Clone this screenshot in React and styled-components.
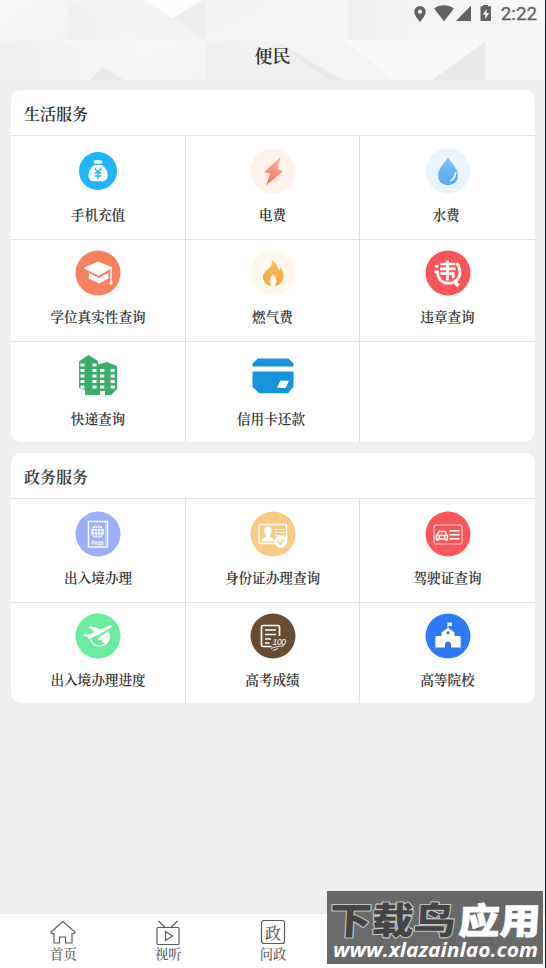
import React from 'react'
import styled, { createGlobalStyle } from 'styled-components'

const GlobalStyle = createGlobalStyle`
  * {
    box-sizing: border-box;
  }

  body {
    margin: 0;
    background: #efefef;
    color: #333;
    font-family: 'Noto Serif CJK SC', 'Noto Sans CJK SC', serif;
  }
`

const Screen = styled.div`
  position: relative;
  display: flex;
  flex-direction: column;
  width: 546px;
  height: 968px;
  overflow: hidden;
  background: #efefef;
  border-right: 1px solid #101c22;
`

const Header = styled.header`
  position: relative;
  height: 80px;
  flex-shrink: 0;
`

const Pattern = styled.svg`
  position: absolute;
  inset: 0;
`

const StatusBar = styled.div`
  position: relative;
  display: flex;
  justify-content: flex-end;
  align-items: center;
  height: 28px;
  padding-right: 8px;
  color: #626262;
`

const Time = styled.span`
  margin-left: 9px;
  font-family: Roboto, sans-serif;
  font-size: 18.8px;
  line-height: 28px;
  -webkit-text-stroke: 0.3px currentColor;
`

const Title = styled.h1`
  position: relative;
  margin: 0;
  font-size: 18px;
  font-weight: 600;
  line-height: 55px;
  text-align: center;
`

const Main = styled.main`
  display: flex;
  flex: 1;
  flex-direction: column;
  gap: 11px;
  padding: 10px 10px 0 11px;
`

const Card = styled.section`
  overflow: hidden;
  border-radius: 10px;
  background: #fff;
`

const CardTitle = styled.h2`
  height: 45px;
  margin: 0;
  padding-left: 13px;
  font-size: 16px;
  font-weight: 600;
  line-height: 47px;
`

const Grid = styled.div`
  display: grid;
  grid-template-columns: 175px 174px 175px;
  grid-template-rows: ${({$rows}) => $rows};
`

const Cell = styled.div`
  display: flex;
  flex-direction: column;
  align-items: center;
  padding-top: ${({$top}) => $top || 12}px;
  border-top: 1px solid #e2e2e2;
  border-right: 1px solid #e2e2e2;

  &:nth-child(3n) {
    border-right: none;
  }
`

const Icon = styled.svg`
  display: block;
  width: 46px;
  height: 46px;
  flex-shrink: 0;
`

const Label = styled.span`
  margin-top: 10px;
  margin-right: ${({$shift}) => $shift || 0}px;
  font-size: 13.6px;
  font-weight: 600;
  line-height: 20px;
  white-space: nowrap;
`

const NavBar = styled.nav`
  display: flex;
  height: 55px;
  padding: 0 10px 0 11px;
  border-top: 1px solid #e9e9f3;
  background: #fff;
`

const NavItem = styled.div`
  display: flex;
  flex: 1;
  flex-direction: column;
  align-items: center;
  padding-top: 5px;
  color: ${({$active}) => $active ? '#e02020' : '#5c5c5c'};
  font-size: 13.3px;
  font-weight: 500;
  line-height: 16px;
`

const NavIcon = styled.svg`
  width: 28px;
  height: 27px;
  fill: none;
  stroke: currentColor;
  stroke-width: 1.2;
`

const Watermark = styled.div`
  position: absolute;
  left: 327px;
  top: 891px;
  width: 216px;
  height: 73px;
  background: rgba(90, 90, 90, 0.91);
`

const CardList = [
  {
    title: '生活服务',
    rows: '104px 102px 101px',
    items: [
      { label: '手机充值', icon: 'recharge' },
      { label: '电费', icon: 'power' },
      { label: '水费', icon: 'water', shift: 3 },
      { label: '学位真实性查询', icon: 'degree', top: 10 },
      { label: '燃气费', icon: 'gas', top: 10 },
      { label: '违章查询', icon: 'violation', top: 10 },
      { label: '快递查询', icon: 'express', top: 10 },
      { label: '信用卡还款', icon: 'credit', top: 10, shift: 3 },
      { label: '', top: 10 },
    ],
  },
  {
    title: '政务服务',
    rows: '104px 101px',
    items: [
      { label: '出入境办理', icon: 'passport' },
      { label: '身份证办理查询', icon: 'idcard' },
      { label: '驾驶证查询', icon: 'license' },
      { label: '出入境办理进度', icon: 'travel', top: 10 },
      { label: '高考成绩', icon: 'score', top: 10 },
      { label: '高等院校', icon: 'college', top: 10 },
    ],
  },
]

const icons = {
  recharge: (
    <>
      <circle cx="23" cy="23" r="19" fill="#1fb6fb" />
      <rect x="18.7" y="12.2" width="8.6" height="3.6" rx="1.5" fill="#fff" />
      <path d="M19.5 17h7c3.500 2 6.200 6 6.200 10.200 0 4.500-2.800 6.100-6.200 6.100h-7c-3.600 0-6.100-1.800-6.100-6.100 0-4.200 2.600-8.200 6.100-10.200Z" fill="#fff" />
      <path d="m20 20.500 3 4 3-4M19.700 25h6.600M19.700 28h6.600M23 24.500v6.300" fill="none" stroke="#1fb6fb" strokeWidth="1.500" />
    </>
  ),
  power: (
    <>
      <circle cx="23" cy="23" r="22.500" fill="#fff1ec" />
      <path d="M30.500 9 14 24l6.300 1.500L16 37.500l17-14.300-5.500-1.700Z" fill="url(#bolt)" />
    </>
  ),
  water: (
    <>
      <circle cx="23" cy="23" r="22.500" fill="#eaf4fe" />
      <path d="M23 9.500c3 5 10 10.900 10 18 0 5.700-4.300 9.500-10 9.500s-10-3.800-10-9.500c0-7.100 7-13 10-18Z" fill="url(#drop)" />
      <path d="M30.800 24c.3 4.500-1.500 7.500-5.800 9.300 3-2.500 4.500-5.300 5.800-9.300Z" fill="#eaf7ff" stroke="#eaf7ff" />
    </>
  ),
  degree: (
    <>
      <circle cx="23" cy="23" r="22.500" fill="#f4825f" />
      <path d="m23 11.500 14.500 6-13.800 8.200L8.300 18ZM13.800 22.800l10 5.300 9.700-5.300v5.600L24 33.500l-10.200-4.800Z" fill="#fff" />
      <path d="M36 18v14.500" fill="none" stroke="#fff" strokeWidth="1.300" />
      <circle cx="36" cy="33" r="1.600" fill="#fff" />
    </>
  ),
  gas: (
    <>
      <circle cx="23" cy="23" r="22.500" fill="#fff8ec" />
      <path d="M21.500 10c6.200 3 5.700 8.500 8 10.500.7-1.200.8-2.500.5-3.700 3.600 4 4 8.500 3 12.200-1.300 4.500-4.800 6.700-8.500 7 2.900-3.700 2.700-8-1.500-12-3.900 4-4.200 8-1.500 12-4.500-.8-7.800-3.700-8.500-7.500-.9-4.500 2.600-7.300 5.400-9.700 2.900-2.400 4.300-5.300 3.100-8.800Z" fill="url(#flame)" />
    </>
  ),
  violation: (
    <>
      <circle cx="23" cy="23" r="22.500" fill="#fa5659" />
      <g fill="none" stroke="#fff" strokeWidth="2.700">
        <path d="M15.500 14h14.700M15 18.800h15.500M15.500 23.600h12.700v4.700M22.500 10.500V30.500" />
        <path d="M10 15.500l3.300 1.500M9.500 21.800h3c0 7 4.500 11.600 11 11.600 7 0 11.500-4.900 11.500-10.900 0-4-1.200-7-3.400-9.700" />
        <path d="m28.500 30.500 5 5.500" strokeWidth="3.600" />
      </g>
    </>
  ),
  express: (
    <>
      <path d="M4 9.500 13.500 3 23 9v3.500l9-2.500 10 4v23L36 43h-6v-4h-5v4H10v-5l-6-2Z" fill="#39ad6a" />
      <path d="M5.500 13h4M5.500 18.500h4M5.500 24h4M5.500 29.500h4M5.500 35h4M17.500 13h4M17.500 18.500h4M17.500 24h4M17.500 29.500h4M17.500 35h4M25 18.500h4.300M25 24h4.300M25 29.500h4.300M25 35h4.300M35.500 18.500h4.300M35.500 24h4.300M35.500 29.500h4.300M35.500 35h4.300" stroke="#fff" strokeWidth="3" />
    </>
  ),
  credit: (
    <>
      <path d="M8 6.500h30.500l5 5v3H2.500v-3ZM2.500 19.500h41v15.200l-5.500 6.500H9l-6.500-6.500Z" fill="#1792dc" />
      <path d="m30.500 28.500 8.500.2-3.500 7.300-8.500-.2Z" fill="#fff" />
    </>
  ),
  passport: (
    <>
      <circle cx="23" cy="23" r="22.500" fill="#9caffb" />
      <rect x="13.500" y="10.500" width="19" height="25.500" fill="none" stroke="#fff" strokeWidth="1.500" />
      <path d="M30.800 11v24.500" stroke="#e8edff" strokeWidth=".8" />
      <circle cx="22.500" cy="20.700" r="6.500" fill="#fff" />
      <g fill="none" stroke="#9caffb" strokeWidth=".8">
        <ellipse cx="22.500" cy="20.700" rx="3.200" ry="6.500" />
        <path d="M22.500 14v13.500M16 20.700h13M17 17.500h11M17 24h11" />
      </g>
      <text x="16.500" y="34" fill="#fff" fontFamily="Liberation Sans, sans-serif" fontSize="4.500" fontWeight="700" textLength="12">PASS</text>
    </>
  ),
  idcard: (
    <>
      <circle cx="23" cy="23" r="22.500" fill="#f9ca83" />
      <rect x="9" y="13.500" width="27.500" height="19" rx="1" fill="none" stroke="#fff" strokeWidth="1.300" />
      <path d="M17.500 15.500c3 0 4.500 2 4 5-.3 2-1 3-1.500 3.800v1.500l4.500 2.400v2.300H11.800v-2.300l4.200-2.400v-1.500c-2.400-3.400-2.700-8.800 1.500-8.800Z" fill="#fff" />
      <path d="M25 18.500h9M25 21.500h9M25 24.500h5" stroke="#fff" strokeWidth="1.200" />
      <circle cx="30.800" cy="30.500" r="6.300" fill="#fff" />
      <path d="m27.500 30 2.700 3 4-4.800" fill="none" stroke="#f9ca83" strokeWidth="1.500" />
    </>
  ),
  license: (
    <>
      <circle cx="23" cy="23" r="22.500" fill="#fa5659" />
      <rect x="9" y="14" width="28" height="19" rx="1.500" fill="none" stroke="#ffd0d0" strokeWidth="1.200" />
      <path d="m12.500 23.500 1.300-3h6.400l1.300 3M11.200 24.500h11.300v3.500H11.200Z" fill="none" stroke="#fff" strokeWidth="1.400" />
      <path d="M12.500 28v2M21.500 28v2M13.500 26h1.500M19 26h1.500" stroke="#fff" strokeWidth="1.800" />
      <path d="M24.500 19.700h10M24.500 23.700h10M24.500 27.800h10" stroke="#fff" strokeWidth="1.600" />
    </>
  ),
  travel: (
    <>
      <circle cx="23" cy="23" r="22.500" fill="#6aec9e" />
      <path d="M15.500 26.500c1.800 4.500 5.800 7 10 6.500 5.500-.6 9.500-5 8.700-12" fill="none" stroke="#fff" strokeWidth="1.200" />
      <path d="M25 23.500c3.500-1.800 6-3.500 8.200-5.500 2.600 4 1.500 9.500-2.200 12.500l-3.800-1-.3-2.300-4.400-.7Z" fill="#fff" />
      <path d="M8 22.500 9 21l6 .3 4.500-2.300-6-4.800 2.300-1.200 9.500 3.200 8.500-3.500c2.800-1 3.800.7 1.800 2L22 22.500l-8 3.500-1.500-2Z" fill="#fff" />
    </>
  ),
  score: (
    <>
      <circle cx="23" cy="23" r="22.500" fill="#694d32" />
      <g fill="none" stroke="#fff" strokeWidth="1.700">
        <path d="M21.500 33.500H13c-1 0-1.500-.5-1.500-1.500V14c0-1 .5-1.500 1.500-1.500h15c1 0 1.500.5 1.500 1.500v9" />
        <path d="M15 17h11M15 21.500h11M15 26h6M15 30h4.500" strokeWidth="1.500" />
        <path d="M21 35.500c4-2 8-2 13-2.700M23 37.500l5-2" strokeWidth=".9" />
      </g>
      <text x="22.500" y="31.500" fill="#fff" fontFamily="Liberation Sans, sans-serif" fontSize="8.500" fontStyle="italic" textLength="13.500">100</text>
    </>
  ),
  college: (
    <>
      <circle cx="23" cy="23" r="22.500" fill="#2c7af5" />
      <path d="M22.500 15V9.500H27V13h-3.500v2l6 4.500v3.500H34c1 0 1.700.7 1.700 1.700V34.500H26v-3c0-4-6-4-6 0v3h-9.700v-9.800c0-1 .7-1.700 1.700-1.700h4.500v-3.500Z" fill="#fff" />
      <circle cx="23" cy="19.700" r="1.500" fill="#5757cd" />
    </>
  ),
}

const Defs = styled.svg`
  position: absolute;
`

// gradients shared by the icons and the header
const Gradients = () => (
  <Defs width="0" height="0">
    <defs>
      <linearGradient id="bolt" x1="0" y1="0" x2="0" y2="1">
        <stop stopColor="#fbb59e" />
        <stop offset="1" stopColor="#f3725c" />
      </linearGradient>
      <linearGradient id="drop" x1="0" y1="0" x2="0" y2="1">
        <stop stopColor="#7fc3f8" />
        <stop offset="1" stopColor="#50a8f6" />
      </linearGradient>
      <linearGradient id="flame" x1="0" y1="0" x2="0" y2="1">
        <stop stopColor="#fbc062" />
        <stop offset="1" stopColor="#f0a43e" />
      </linearGradient>
      <linearGradient id="shade" x1="0" y1="0" x2="1" y2="0">
        <stop stopColor="#efefef" />
        <stop offset="1" stopColor="#f5f5f5" />
      </linearGradient>
      <linearGradient id="light" x1="0" y1="0" x2="1" y2="1">
        <stop stopColor="#f7f7f7" />
        <stop offset="1" stopColor="#f3f3f3" />
      </linearGradient>
    </defs>
  </Defs>
)

const HeaderPattern = () => (
  <Pattern width="545" height="80">
    <rect width="545" height="80" fill="#f5f5f5" />
    <path d="M0 0h68v40H0Z" fill="url(#light)" />
    <path d="M68 0v40h68Z" fill="url(#shade)" />
    <path d="M68 0h70v40Z" fill="#f3f3f3" />
    <path d="m145 0 28 18L200 0Z" fill="#fefefe" />
    <path d="m138 0 35 18 31 22h-66Z" fill="#f3f3f3" />
    <path d="m173 18 32-18v40Z" fill="#eee" />
    <path d="M205 0h72l-72 40Z" fill="#f3f3f3" />
    <path d="m277 0 68 40H240Z" fill="#f5f5f5" />
    <path d="M348 0h80v40h-80Z" fill="url(#shade)" />
    <path d="m418 40 68-40h59v40Z" fill="#f4f4f4" />
    <path d="m486 0 59 27V0Z" fill="#f8f8f8" />
    <path d="M0 40h66l38 27-14 13H0Z" fill="url(#shade)" />
    <path d="m70 45 68-4v39h-22l-14-12Z" fill="#f5f5f5" />
    <path d="m90 80 13-13 21 13Z" fill="#eaeaea" />
    <path d="M138 40h68v40h-68Z" fill="url(#light)" />
    <path d="M206 40h72l50 40H206Z" fill="url(#shade)" />
    <path d="m277 40 52 40h-72Z" fill="#f0f0f0" />
    <path d="M277 40h67l50 40h-65Z" fill="#f4f4f4" />
    <path d="m277 42 52 38h14Z" fill="#e9e9e9" />
    <path d="M345 41h72v39h-23Z" fill="#fafafa" />
    <path d="M417 40h68l-53 40h-15Z" fill="#f8f8f8" />
    <path d="m432 80 53-38v38Z" fill="#e9e9e9" />
    <path d="M485 40h60v40h-60Z" fill="#f5f5f5" />
    <path d="M0 41h545" stroke="#fafafa" strokeOpacity=".6" />
  </Pattern>
)

const StatusIcons = () => (
  <svg width="80" height="20" viewBox="412 4 80 20" fill="currentColor">
    <path fillRule="evenodd" d="M420 6.200c-3.300 0-5.700 2.400-5.700 5.500 0 3.800 5.700 10.300 5.700 10.300s5.700-6.500 5.700-10.300c0-3.100-2.400-5.500-5.700-5.500Zm0 3.400a2.100 2.100 0 1 1 0 4.200 2.100 2.100 0 0 1 0-4.200Z" />
    <path d="M434 8.500c6-4.300 14-4.300 20 0l-10 12.700ZM456 21l15-15.500V21Z" />
    <path fillRule="evenodd" d="M483 6.300V5h5v1.300h3V21h-10.500V6.300Zm4 2.700-4.500 5.500h2.700V19l4-6h-2.800Z" />
  </svg>
)

const ServiceCard = ({ title, rows, items }) => (
  <Card>
    <CardTitle>{title}</CardTitle>
    <Grid $rows={rows}>
      {items.map((item, i) => (
        <Cell key={i} $top={item.top}>
          {item.icon && <Icon viewBox="0 0 46 46">{icons[item.icon]}</Icon>}
          {item.label && <Label $shift={item.shift}>{item.label}</Label>}
        </Cell>
      ))}
    </Grid>
  </Card>
)

function App() {
  return (
    <Screen>
      <GlobalStyle />
      <Gradients />

      <Header>
        <HeaderPattern />
        <StatusBar>
          <StatusIcons />
          <Time>2:22</Time>
        </StatusBar>
        <Title>便民</Title>
      </Header>

      <Main>
        {CardList.map((card) => <ServiceCard key={card.title} {...card} />)}
      </Main>

      <NavBar>
        <NavItem>
          <NavIcon viewBox="0 0 28 27">
            <path d="M14 2.500 2 13l1 1.500h2v9.500h5.500v-6h6v6H23v-9.500h2l1-1.500Z" />
          </NavIcon>
          首页
        </NavItem>
        <NavItem>
          <NavIcon viewBox="0 0 28 27">
            <rect x="3" y="8.500" width="22" height="17" rx="1" />
            <path d="m4.500 2 6.500 6.500M23.500 2 17 8.500M11.500 12.500v9l7-4.500Z" />
          </NavIcon>
          视听
        </NavItem>
        <NavItem>
          <NavIcon viewBox="0 0 28 27">
            <rect x="2.500" y="1.500" width="23" height="23" rx="2" />
            <text x="6" y="19.500" fill="currentColor" stroke="none" fontSize="16">政</text>
          </NavIcon>
          问政
        </NavItem>
        <NavItem $active>
          <NavIcon viewBox="0 0 28 27">
            <path d="M9 9h11v5H9M16 14l3 8" />
          </NavIcon>
        </NavItem>
        <NavItem>
          <NavIcon viewBox="0 0 28 27">
            <circle cx="14" cy="9" r="6" />
            <path d="M4 25c0-10 20-10 20 0Z" />
          </NavIcon>
        </NavItem>
      </NavBar>

      <Watermark>
        <svg width="216" height="73" fontFamily="'Noto Sans CJK SC', sans-serif" fontWeight="900">
          <g transform="translate(2 43) skewX(-3) scale(1 .88)" strokeLinejoin="round" paintOrder="stroke">
            <text fill="#444" stroke="#c4c4c4" strokeWidth="2.400" fontSize="42" textLength="126">下载鸟</text>
            <text x="129" fill="#fff" stroke="#fff" strokeWidth=".8" fontSize="41" textLength="82">应用</text>
          </g>
          <text x="6" y="66" fill="#fff" fontFamily="'Open Sans', sans-serif" fontSize="19.500" fontWeight="700" fontStyle="italic" textLength="205" lengthAdjust="spacingAndGlyphs">www.xlazainlao.com</text>
        </svg>
      </Watermark>
    </Screen>
  )
}

export default App
